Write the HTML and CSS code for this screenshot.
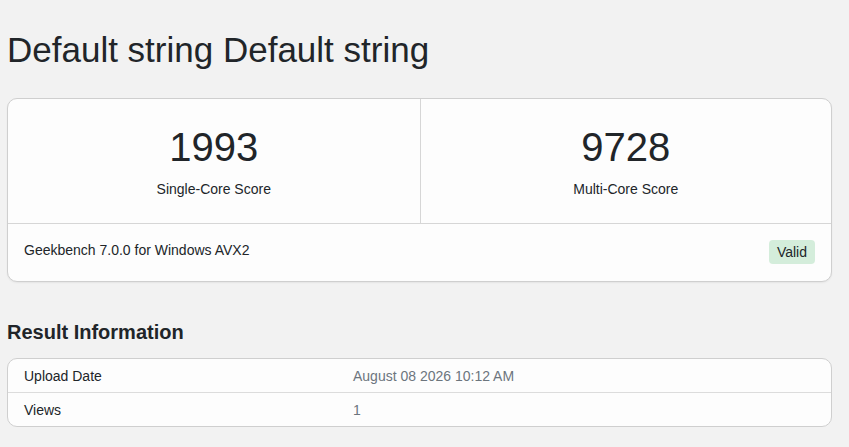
FILE: index.html
```html
<!DOCTYPE html>
<html>
<head>
<meta charset="utf-8">
<link rel="stylesheet" href="styles.css">
</head>
<body>
<h1 class="title">Default string Default string</h1>
<div class="card">
  <div class="scores">
    <div class="score">
      <div class="score-value">1993</div>
      <div class="score-label">Single-Core Score</div>
    </div>
    <div class="score">
      <div class="score-value">9728</div>
      <div class="score-label">Multi-Core Score</div>
    </div>
  </div>
  <div class="card-footer">
    <span class="version">Geekbench 7.0.0 for Windows AVX2</span>
    <span class="badge">Valid</span>
  </div>
</div>
<h2 class="section">Result Information</h2>
<div class="table">
  <div class="row">
    <div class="cell-label">Upload Date</div>
    <div class="cell-value">August 08 2026 10:12 AM</div>
  </div>
  <div class="row">
    <div class="cell-label">Views</div>
    <div class="cell-value">1</div>
  </div>
</div>
</body>
</html>
```
FILE: styles.css
```css
html, body {
  margin: 0;
  padding: 0;
}
body {
  background: #f2f2f2;
  font-family: "Liberation Sans", Arial, sans-serif;
  color: #212529;
  padding: 0 17px 0 7px;
}
.title {
  font-size: 35px;
  font-weight: 400;
  margin: 0;
  padding-top: 29px;
  line-height: 42px;
  height: 98px;
  box-sizing: border-box;
}
.card {
  background: #fdfdfd;
  border: 1px solid #cfcfcf;
  border-radius: 10px;
  box-shadow: 0 1px 2px rgba(0,0,0,0.06);
}
.scores {
  display: grid;
  grid-template-columns: 1fr 1fr;
  border-bottom: 1px solid #d6d6d6;
}
.score {
  text-align: center;
  padding: 24px 0 0;
  height: 124px;
  box-sizing: border-box;
}
.score + .score {
  border-left: 1px solid #d6d6d6;
}
.score-value {
  font-size: 40px;
  line-height: 48px;
}
.score-label {
  font-size: 14px;
  line-height: 20px;
  margin-top: 8px;
}
.card-footer {
  display: flex;
  justify-content: space-between;
  align-items: flex-start;
  padding: 17px 16px 14px 16px;
  height: 57px;
  box-sizing: border-box;
  font-size: 14px;
}
.version {
  line-height: 18px;
}
.badge {
  background: #d4eddb;
  border-radius: 4px;
  padding: 3px 8px;
  line-height: 18px;
  margin-top: -1px;
}
.section {
  font-size: 20px;
  font-weight: 700;
  margin: 0;
  padding-top: 38px;
  line-height: 24px;
  height: 76px;
  box-sizing: border-box;
}
.table {
  background: #fdfdfd;
  border: 1px solid #cfcfcf;
  border-radius: 10px;
  font-size: 14px;
}
.row {
  display: grid;
  grid-template-columns: 329px 1fr;
  padding: 0 16px;
  height: 33px;
  align-items: center;
}
.row + .row {
  border-top: 1px solid #dcdcdc;
}
.cell-value {
  color: #6c757d;
}
```
